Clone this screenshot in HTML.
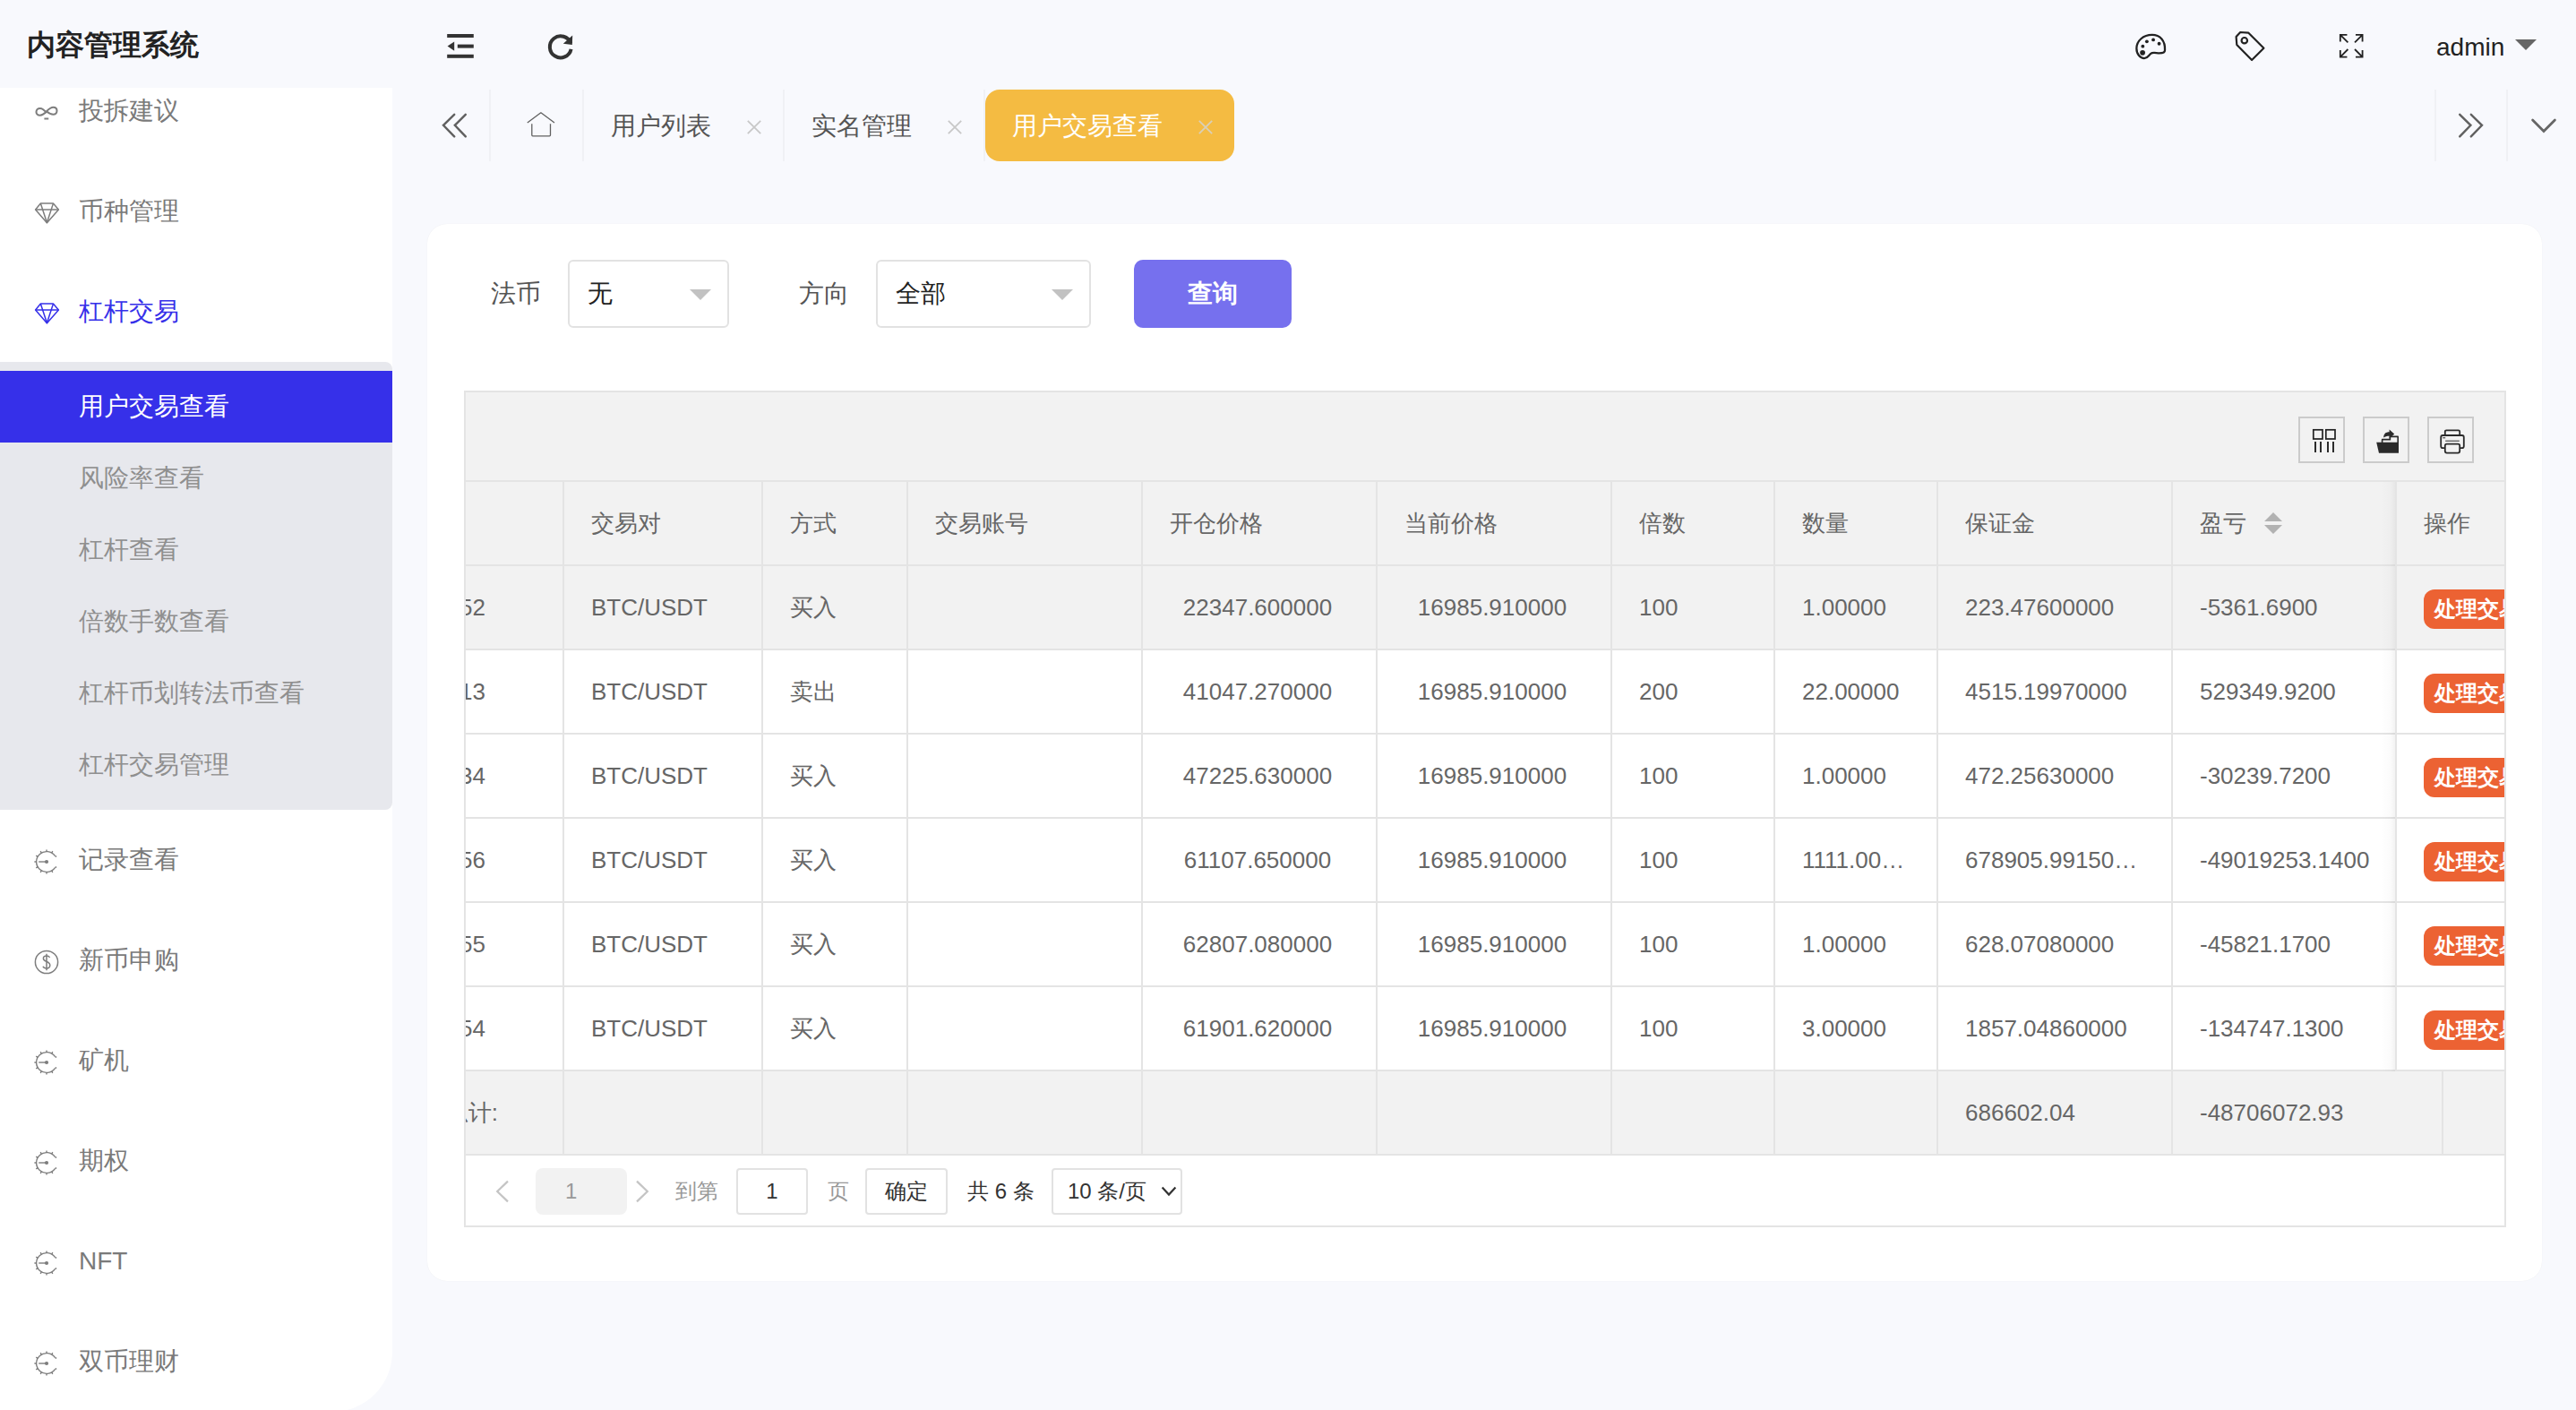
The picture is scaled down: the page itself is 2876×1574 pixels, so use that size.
<!DOCTYPE html>
<html><head><meta charset="utf-8"><style>
html,body{margin:0;padding:0}
@media (min-width:2000px){html{zoom:2}}
body{width:1438px;height:787px;overflow:hidden;position:relative;background:#f8f9fd;font-family:"Liberation Sans",sans-serif;color:#333}
.abs{position:absolute}
svg{position:absolute;overflow:visible}
.logo{left:15px;top:14px;font-size:16px;font-weight:bold;color:#222;line-height:22px}
.side{left:0;top:49px;width:219px;height:739px;background:#fff;border-bottom-right-radius:33.5px;overflow:hidden}
.mi{position:absolute;left:0;width:219px;height:56px;line-height:56px;font-size:14px;color:#7a7a7a}
.mi .t{position:absolute;left:44px;top:0}
.sub{position:absolute;left:0;top:153px;width:219px;height:250px;background:#e7e8ed;border-radius:0 4px 4px 0}
.si{position:absolute;left:0;width:219px;height:40px;line-height:40px;font-size:14px;color:#8f8f8f}
.si .t{position:absolute;left:44px;top:0}
.si.on{background:#3630e9;color:#fff}
.tt{position:absolute;top:50.5px;height:40px;line-height:40px;font-size:14px;color:#555;white-space:nowrap}
.sep{position:absolute;top:50px;width:1px;height:40px;background:#f0f1f5}
.card{left:238.5px;top:125px;width:1180.5px;height:590px;background:#fff;border-radius:11px;box-shadow:0 0 0.5px rgba(0,0,0,0.08)}
.lbl{position:absolute;top:145px;height:38px;line-height:38px;font-size:14px;color:#555}
.sel{position:absolute;top:145px;height:36px;border:1px solid #e2e2e2;border-radius:3px;background:#fff;line-height:36px;font-size:14px;color:#222}
.sel .v{position:absolute;left:10px;top:0}
.sel .tri{position:absolute;top:15.5px;width:0;height:0;border-left:6px solid transparent;border-right:6px solid transparent;border-top:6px solid #c2c2c2}
.btn{position:absolute;left:633px;top:145px;width:88px;height:38px;line-height:38px;background:#7670ee;color:#fff;border-radius:5px;text-align:center;font-size:14px;font-weight:bold}
.tbl{position:absolute;left:259px;top:218px;width:1138px;height:465px;border:1px solid #e4e4e4;background:#fff;overflow:hidden}
.tool{position:absolute;left:0;top:0;width:1138px;height:49px;background:#f2f2f2;border-bottom:1px solid #e4e4e4}
.ib{position:absolute;top:13.5px;width:24px;height:24px;border:1px solid #cbcbcb}
.row{position:absolute;left:0;width:1138px;height:46px;border-bottom:1px solid #e4e4e4}
.c{position:absolute;top:0;height:46px;line-height:46px;font-size:13px;color:#666;white-space:nowrap;overflow:hidden}
.vl{position:absolute;width:1px;background:#e4e4e4}
.n{font-size:13px}
.dbtn{position:absolute;left:1094px;top:13px;width:58px;height:22px;line-height:22px;border-radius:6px;background:#ec6233;color:#fff;font-size:12px;font-weight:bold;padding-left:6px;box-sizing:border-box;white-space:nowrap}
.pg{position:absolute;left:0;top:426px;width:1138px;height:38px;background:#fff}
.pbox{position:absolute;top:7px;height:24px;border:1px solid #e2e2e2;border-radius:2px;line-height:24px;font-size:12px;color:#333;text-align:center}
</style></head><body>
<div class="abs logo">内容管理系统</div>
<svg style="left:249px;top:18px" width="16" height="16" viewBox="0 0 16 16" fill="#333">
<rect x="0.6" y="1" width="14.8" height="2"/><rect x="6.4" y="6.8" width="9" height="2"/><rect x="0.6" y="12.4" width="14.8" height="2"/>
<path d="M0.8 7.8 L4.6 5.2 V10.4 Z"/></svg>
<svg style="left:305px;top:18px" width="16" height="16" viewBox="0 0 16 16" fill="none" stroke="#333" stroke-width="2">
<path d="M13.6 6.2 A6 6 0 1 0 13.8 9.4"/><path d="M14.6 1.8 L14.4 7 L9.4 6.4 Z" fill="#333" stroke="none"/></svg>
<svg style="left:1190.8px;top:15.5px" width="20.4" height="20.4" viewBox="0 0 17 17" fill="none" stroke="#222" stroke-width="0.95">
<path d="M8.6 3.3 C4.6 3.3 1.4 6 1.4 9.6 C1.4 12.4 3.2 14.2 5 14.2 C6.6 14.2 7 12.8 8 12 C9 11.2 10.6 11.8 12 11.8 C14 11.8 14.6 11.4 14.6 10.4 C14.8 6 12.4 3.3 8.6 3.3 Z"/>
<circle cx="4.2" cy="11.6" r="1.2" fill="#222" stroke="none"/><circle cx="4.3" cy="8.6" r="0.8" fill="#222" stroke="none"/><circle cx="6.2" cy="6.4" r="0.8" fill="#222" stroke="none"/><circle cx="9.2" cy="5.6" r="0.8" fill="#222" stroke="none"/><circle cx="11.9" cy="7.4" r="0.8" fill="#222" stroke="none"/>
</svg>
<svg style="left:1246.1px;top:16.6px" width="19.55" height="19.55" viewBox="0 0 17 17" fill="none" stroke="#222" stroke-width="0.95" stroke-linejoin="round">
<path d="M2 3.5 L2.3 7.4 L9.6 14.8 L15.4 9 L8 1.6 L4 1.3 Z"/><circle cx="6" cy="5.3" r="1.4"/></svg>
<svg style="left:1304.4px;top:17.3px" width="16.2" height="16.2" viewBox="0 0 17 17" fill="none" stroke="#222" stroke-width="0.95">
<path d="M2 6 V2 H6 M2 2 L6.5 6.5 M11 2 H15 V6 M15 2 L10.5 6.5 M2 11 V15 H6 M2 15 L6.5 10.5 M15 11 V15 H11 M15 15 L10.5 10.5"/></svg>
<div class="abs" style="left:1360px;top:16px;font-size:14px;line-height:21px;color:#222">admin</div>
<div class="abs" style="left:1404px;top:22px;width:0;height:0;border-left:6px solid transparent;border-right:6px solid transparent;border-top:6px solid #666"></div>
<div class="abs side">
<div class="mi" style="top:-15px"><svg style="left:19.5px;top:25px" width="13" height="10" viewBox="0 0 14 10" fill="none" stroke="#7d7d7d" stroke-width="1.1">
<path d="M7 4 C5.6 2 4.4 1.2 3 1.2 C1.8 1.2 0.8 2.1 0.8 3.4 C0.8 4.6 1.8 5.4 3 5.4 C4.4 5.4 5.6 4.6 7 3 C8.4 1.6 9.6 0.6 11 0.6 C12.3 0.6 13.2 1.5 13.2 2.7 C13.2 4 12.2 4.9 11 4.9 C9.6 4.9 8.4 4.2 7 3"/>
<path d="M5.6 7.4 H8.2"/></svg><span class="t">投拆建议</span></div>
<div class="mi" style="top:41px"><svg style="left:19.5px;top:23px" width="14" height="12" viewBox="0 0 14 12" fill="none" stroke="#7d7d7d" stroke-width="0.75" stroke-linejoin="round">
<path d="M3.2 0.5 H10.2 L13.2 4 L6.7 11.4 L0.3 4 Z"/><path d="M0.4 4 H13.1"/><path d="M3.2 0.6 L6.7 11.3 L10.2 0.6"/>
</svg><span class="t">币种管理</span></div>
<div class="mi" style="top:97px;color:#3630e9"><svg style="left:19.5px;top:23px" width="14" height="12" viewBox="0 0 14 12" fill="none" stroke="#3630e9" stroke-width="0.75" stroke-linejoin="round">
<path d="M3.2 0.5 H10.2 L13.2 4 L6.7 11.4 L0.3 4 Z"/><path d="M0.4 4 H13.1"/><path d="M3.2 0.6 L6.7 11.3 L10.2 0.6"/>
</svg><span class="t">杠杆交易</span></div>
<div class="sub">
<div class="si on" style="top:5px"><span class="t">用户交易查看</span></div>
<div class="si" style="top:45px"><span class="t">风险率查看</span></div>
<div class="si" style="top:85px"><span class="t">杠杆查看</span></div>
<div class="si" style="top:125px"><span class="t">倍数手数查看</span></div>
<div class="si" style="top:165px"><span class="t">杠杆币划转法币查看</span></div>
<div class="si" style="top:205px"><span class="t">杠杆交易管理</span></div>
</div>
<div class="mi" style="top:403px"><svg style="left:19px;top:22px" width="14" height="14" viewBox="0 0 14 14" fill="none" stroke="#7d7d7d" stroke-width="0.7">
<path d="M11.67 3.73 A5.7 5.7 0 1 0 11.67 10.27"/><path d="M11.67 3.73 L12.57 4.23 M11.67 10.27 L12.57 9.77"/>
<path d="M2.6 7 H6.6"/><circle cx="7" cy="7" r="1.05" fill="#7d7d7d" stroke="none"/>
<path d="M9.85 2.06 L10.40 1.11 M7.00 1.30 L7.00 0.20 M4.15 2.06 L3.60 1.11 M2.06 4.15 L1.11 3.60 M1.30 7.00 L0.20 7.00 M2.06 9.85 L1.11 10.40 M4.15 11.94 L3.60 12.89 M7.00 12.70 L7.00 13.80 M9.85 11.94 L10.40 12.89 "/>
</svg><span class="t">记录查看</span></div>
<div class="mi" style="top:459px"><svg style="left:19px;top:22px" width="14" height="14" viewBox="0 0 14 14" fill="none" stroke="#7d7d7d" stroke-width="0.75">
<circle cx="7" cy="7" r="6.3"/><path d="M8.8 4.4 C8.4 3.8 7.8 3.5 7 3.5 C5.9 3.5 5.2 4.1 5.2 5 C5.2 7 8.9 6.3 8.9 8.8 C8.9 9.8 8.1 10.5 7 10.5 C6 10.5 5.3 10.1 5 9.4 M7 2.4 V11.6"/></svg><span class="t">新币申购</span></div>
<div class="mi" style="top:515px"><svg style="left:19px;top:22px" width="14" height="14" viewBox="0 0 14 14" fill="none" stroke="#7d7d7d" stroke-width="0.7">
<path d="M11.67 3.73 A5.7 5.7 0 1 0 11.67 10.27"/><path d="M11.67 3.73 L12.57 4.23 M11.67 10.27 L12.57 9.77"/>
<path d="M2.6 7 H6.6"/><circle cx="7" cy="7" r="1.05" fill="#7d7d7d" stroke="none"/>
<path d="M9.85 2.06 L10.40 1.11 M7.00 1.30 L7.00 0.20 M4.15 2.06 L3.60 1.11 M2.06 4.15 L1.11 3.60 M1.30 7.00 L0.20 7.00 M2.06 9.85 L1.11 10.40 M4.15 11.94 L3.60 12.89 M7.00 12.70 L7.00 13.80 M9.85 11.94 L10.40 12.89 "/>
</svg><span class="t">矿机</span></div>
<div class="mi" style="top:571px"><svg style="left:19px;top:22px" width="14" height="14" viewBox="0 0 14 14" fill="none" stroke="#7d7d7d" stroke-width="0.7">
<path d="M11.67 3.73 A5.7 5.7 0 1 0 11.67 10.27"/><path d="M11.67 3.73 L12.57 4.23 M11.67 10.27 L12.57 9.77"/>
<path d="M2.6 7 H6.6"/><circle cx="7" cy="7" r="1.05" fill="#7d7d7d" stroke="none"/>
<path d="M9.85 2.06 L10.40 1.11 M7.00 1.30 L7.00 0.20 M4.15 2.06 L3.60 1.11 M2.06 4.15 L1.11 3.60 M1.30 7.00 L0.20 7.00 M2.06 9.85 L1.11 10.40 M4.15 11.94 L3.60 12.89 M7.00 12.70 L7.00 13.80 M9.85 11.94 L10.40 12.89 "/>
</svg><span class="t">期权</span></div>
<div class="mi" style="top:627px"><svg style="left:19px;top:22px" width="14" height="14" viewBox="0 0 14 14" fill="none" stroke="#7d7d7d" stroke-width="0.7">
<path d="M11.67 3.73 A5.7 5.7 0 1 0 11.67 10.27"/><path d="M11.67 3.73 L12.57 4.23 M11.67 10.27 L12.57 9.77"/>
<path d="M2.6 7 H6.6"/><circle cx="7" cy="7" r="1.05" fill="#7d7d7d" stroke="none"/>
<path d="M9.85 2.06 L10.40 1.11 M7.00 1.30 L7.00 0.20 M4.15 2.06 L3.60 1.11 M2.06 4.15 L1.11 3.60 M1.30 7.00 L0.20 7.00 M2.06 9.85 L1.11 10.40 M4.15 11.94 L3.60 12.89 M7.00 12.70 L7.00 13.80 M9.85 11.94 L10.40 12.89 "/>
</svg><span class="t">NFT</span></div>
<div class="mi" style="top:683px"><svg style="left:19px;top:22px" width="14" height="14" viewBox="0 0 14 14" fill="none" stroke="#7d7d7d" stroke-width="0.7">
<path d="M11.67 3.73 A5.7 5.7 0 1 0 11.67 10.27"/><path d="M11.67 3.73 L12.57 4.23 M11.67 10.27 L12.57 9.77"/>
<path d="M2.6 7 H6.6"/><circle cx="7" cy="7" r="1.05" fill="#7d7d7d" stroke="none"/>
<path d="M9.85 2.06 L10.40 1.11 M7.00 1.30 L7.00 0.20 M4.15 2.06 L3.60 1.11 M2.06 4.15 L1.11 3.60 M1.30 7.00 L0.20 7.00 M2.06 9.85 L1.11 10.40 M4.15 11.94 L3.60 12.89 M7.00 12.70 L7.00 13.80 M9.85 11.94 L10.40 12.89 "/>
</svg><span class="t">双币理财</span></div>
</div>
<svg style="left:247px;top:63px" width="14" height="14" viewBox="0 0 14 14" fill="none" stroke="#606060" stroke-width="1.2" stroke-linecap="round">
<path d="M6.6 0.9 L0.5 6.9 L6.6 13.2 M12.9 0.9 L6.9 6.9 L12.9 13.2"/></svg>
<div class="sep" style="left:273px"></div>
<svg style="left:294px;top:62px" width="16" height="16" viewBox="0 0 16 16" fill="none" stroke="#606060" stroke-width="0.65" stroke-linejoin="round">
<path d="M0.4 6.5 L7.95 0.9 L15.5 6.5"/><path d="M2.9 7.1 V13.4 Q2.9 13.9 3.4 13.9 H12.75 Q13.25 13.9 13.25 13.4 V7.1"/></svg>
<div class="sep" style="left:325px"></div>
<div class="tt" style="left:341px">用户列表</div>
<svg style="left:417px;top:67px" width="8" height="8" viewBox="0 0 8 8" stroke="#c8c8c8" stroke-width="0.9"><path d="M0.4 0.4 L7.6 7.6 M7.6 0.4 L0.4 7.6"/></svg>
<div class="sep" style="left:437px"></div>
<div class="tt" style="left:453px">实名管理</div>
<svg style="left:529px;top:67px" width="8" height="8" viewBox="0 0 8 8" stroke="#c8c8c8" stroke-width="0.9"><path d="M0.4 0.4 L7.6 7.6 M7.6 0.4 L0.4 7.6"/></svg>
<div class="sep" style="left:549px"></div>
<div class="abs" style="left:550px;top:50px;width:139px;height:40px;background:#f4bb42;border-radius:8px"></div>
<div class="tt" style="left:565px;color:#fff">用户交易查看</div>
<svg style="left:669px;top:67px" width="8" height="8" viewBox="0 0 8 8" stroke="#d9cfb8" stroke-width="0.9"><path d="M0.4 0.4 L7.6 7.6 M7.6 0.4 L0.4 7.6"/></svg>
<div class="sep" style="left:1359px"></div>
<svg style="left:1372px;top:63px" width="14" height="14" viewBox="0 0 14 14" fill="none" stroke="#606060" stroke-width="1.2" stroke-linecap="round">
<path d="M1.1 0.9 L7.2 6.9 L1.1 13.2 M7.4 0.9 L13.5 6.9 L7.4 13.2"/></svg>
<div class="sep" style="left:1399px"></div>
<svg style="left:1413px;top:66px" width="14" height="9" viewBox="0 0 14 9" fill="none" stroke="#666" stroke-width="1.4" stroke-linecap="round">
<path d="M0.8 1 L7 7.2 L13.2 1"/></svg>
<div class="abs card"></div>
<div class="lbl" style="left:274px">法币</div>
<div class="sel" style="left:317px;width:88px"><span class="v">无</span><span class="tri" style="left:67px"></span></div>
<div class="lbl" style="left:446px">方向</div>
<div class="sel" style="left:489px;width:118px"><span class="v">全部</span><span class="tri" style="left:97px"></span></div>
<div class="btn">查询</div>
<div class="tbl">
<div class="tool">
<div class="ib" style="left:1023px"></div>
<div class="ib" style="left:1059px"></div>
<div class="ib" style="left:1095px"></div>
<svg style="left:1023px;top:13.5px" width="26" height="26" viewBox="0 0 26 26" fill="none" stroke="#222" stroke-width="0.85">
<rect x="8.4" y="7.4" width="5.1" height="5.1"/><rect x="15.4" y="7.4" width="5.1" height="5.1"/><path d="M9.5 14 V20 M12.5 14 V20 M16.5 14 V20 M19.5 14 V20" stroke-width="0.95"/></svg>
<svg style="left:1059px;top:13.5px" width="26" height="26" viewBox="0 0 26 26" fill="#2a2a2a">
<path d="M7.6 14.4 H20 V20.4 H9 Z"/><path d="M10.4 14.6 V13 C10.4 12.6 10.6 12.4 11 12.4 H14.8 V11.4 C14.8 11 15 10.8 15.4 10.8 H19.4 C19.8 10.8 20 11 20 11.4 V14.6 H19.2 V11.6 H15.6 V13.2 H11.2 V14.6 Z"/>
<path d="M11.6 11.8 C11.6 9.6 12.8 8.6 14.8 8.6 V7.3 L17.6 9.8 L14.8 12.2 V10.9 C13.4 10.9 12.4 11.2 11.6 11.8 Z"/></svg>
<svg style="left:1095px;top:13.5px" width="26" height="26" viewBox="0 0 26 26" fill="none" stroke="#2a2a2a" stroke-width="0.9">
<path d="M9.9 10.4 V8.4 C9.9 7.9 10.2 7.7 10.7 7.7 H17.3 C17.8 7.7 18.1 7.9 18.1 8.4 V10.4"/>
<path d="M9.6 17.6 H8.6 C7.9 17.6 7.6 17.2 7.6 16.5 V11.6 C7.6 10.9 7.9 10.5 8.6 10.5 H19.4 C20.1 10.5 20.4 10.9 20.4 11.6 V16.5 C20.4 17.2 20.1 17.6 19.4 17.6 H18.4"/>
<rect x="9.9" y="15.3" width="8.2" height="5" rx="1"/><path d="M10.1 13.6 H17.9" stroke-width="0.5"/><path d="M8.6 11.9 H10.1" stroke-width="0.5"/></svg>
</div>
<div class="row" style="top:50px;background:#f2f2f2">
<div class="c" style="left:70px;width:95px">交易对</div>
<div class="c" style="left:181px;width:65px">方式</div>
<div class="c" style="left:262px;width:115px">交易账号</div>
<div class="c" style="left:393px;width:115px">开仓价格</div>
<div class="c" style="left:524px;width:115px">当前价格</div>
<div class="c" style="left:655px;width:75px">倍数</div>
<div class="c" style="left:746px;width:75px">数量</div>
<div class="c" style="left:837px;width:115px">保证金</div>
<div class="c" style="left:968px;width:135px">盈亏</div>
</div>
<svg style="left:1004px;top:67px" width="10" height="12" viewBox="0 0 10 12" fill="#b2b2b2"><path d="M0 5 L5 0 L10 5 Z M0 7 H10 L5 12 Z"/></svg>
<div class="row" style="top:97px;background:#f2f2f2">
<div class="c n" style="left:0;width:54px"><span style="position:absolute;right:43px">152</span></div>
<div class="c n" style="left:70px;width:95px">BTC/USDT</div>
<div class="c" style="left:181px;width:65px">买入</div>
<div class="c n" style="left:378px;width:128px;text-align:center">22347.600000</div>
<div class="c n" style="left:509px;width:128px;text-align:center">16985.910000</div>
<div class="c n" style="left:655px;width:75px">100</div>
<div class="c n" style="left:746px;width:75px">1.00000</div>
<div class="c n" style="left:837px;width:115px">223.47600000</div>
<div class="c n" style="left:968px;width:135px">-5361.6900</div>
</div>
<div class="row" style="top:144px;background:#fff">
<div class="c n" style="left:0;width:54px"><span style="position:absolute;right:43px">113</span></div>
<div class="c n" style="left:70px;width:95px">BTC/USDT</div>
<div class="c" style="left:181px;width:65px">卖出</div>
<div class="c n" style="left:378px;width:128px;text-align:center">41047.270000</div>
<div class="c n" style="left:509px;width:128px;text-align:center">16985.910000</div>
<div class="c n" style="left:655px;width:75px">200</div>
<div class="c n" style="left:746px;width:75px">22.00000</div>
<div class="c n" style="left:837px;width:115px">4515.19970000</div>
<div class="c n" style="left:968px;width:135px">529349.9200</div>
</div>
<div class="row" style="top:191px;background:#fff">
<div class="c n" style="left:0;width:54px"><span style="position:absolute;right:43px">134</span></div>
<div class="c n" style="left:70px;width:95px">BTC/USDT</div>
<div class="c" style="left:181px;width:65px">买入</div>
<div class="c n" style="left:378px;width:128px;text-align:center">47225.630000</div>
<div class="c n" style="left:509px;width:128px;text-align:center">16985.910000</div>
<div class="c n" style="left:655px;width:75px">100</div>
<div class="c n" style="left:746px;width:75px">1.00000</div>
<div class="c n" style="left:837px;width:115px">472.25630000</div>
<div class="c n" style="left:968px;width:135px">-30239.7200</div>
</div>
<div class="row" style="top:238px;background:#fff">
<div class="c n" style="left:0;width:54px"><span style="position:absolute;right:43px">156</span></div>
<div class="c n" style="left:70px;width:95px">BTC/USDT</div>
<div class="c" style="left:181px;width:65px">买入</div>
<div class="c n" style="left:378px;width:128px;text-align:center">61107.650000</div>
<div class="c n" style="left:509px;width:128px;text-align:center">16985.910000</div>
<div class="c n" style="left:655px;width:75px">100</div>
<div class="c n" style="left:746px;width:75px">1111.00…</div>
<div class="c n" style="left:837px;width:115px">678905.99150…</div>
<div class="c n" style="left:968px;width:135px">-49019253.1400</div>
</div>
<div class="row" style="top:285px;background:#fff">
<div class="c n" style="left:0;width:54px"><span style="position:absolute;right:43px">155</span></div>
<div class="c n" style="left:70px;width:95px">BTC/USDT</div>
<div class="c" style="left:181px;width:65px">买入</div>
<div class="c n" style="left:378px;width:128px;text-align:center">62807.080000</div>
<div class="c n" style="left:509px;width:128px;text-align:center">16985.910000</div>
<div class="c n" style="left:655px;width:75px">100</div>
<div class="c n" style="left:746px;width:75px">1.00000</div>
<div class="c n" style="left:837px;width:115px">628.07080000</div>
<div class="c n" style="left:968px;width:135px">-45821.1700</div>
</div>
<div class="row" style="top:332px;background:#fff">
<div class="c n" style="left:0;width:54px"><span style="position:absolute;right:43px">154</span></div>
<div class="c n" style="left:70px;width:95px">BTC/USDT</div>
<div class="c" style="left:181px;width:65px">买入</div>
<div class="c n" style="left:378px;width:128px;text-align:center">61901.620000</div>
<div class="c n" style="left:509px;width:128px;text-align:center">16985.910000</div>
<div class="c n" style="left:655px;width:75px">100</div>
<div class="c n" style="left:746px;width:75px">3.00000</div>
<div class="c n" style="left:837px;width:115px">1857.04860000</div>
<div class="c n" style="left:968px;width:135px">-134747.1300</div>
</div>
<div class="row" style="top:379px;background:#f2f2f2">
<div class="c" style="left:0;width:54px"><span style="position:absolute;right:36px">总计:</span></div>
<div class="c n" style="left:837px">686602.04</div>
<div class="c n" style="left:968px">-48706072.93</div>
</div>
<div class="vl" style="left:54px;top:50px;height:376px"></div>
<div class="vl" style="left:165px;top:50px;height:376px"></div>
<div class="vl" style="left:246px;top:50px;height:376px"></div>
<div class="vl" style="left:377px;top:50px;height:376px"></div>
<div class="vl" style="left:508px;top:50px;height:376px"></div>
<div class="vl" style="left:639px;top:50px;height:376px"></div>
<div class="vl" style="left:730px;top:50px;height:376px"></div>
<div class="vl" style="left:821px;top:50px;height:376px"></div>
<div class="vl" style="left:952px;top:50px;height:376px"></div>
<div class="vl" style="left:1103px;top:50px;height:376px"></div>
<div class="abs" style="left:1069px;top:50px;width:9px;height:329px;background:linear-gradient(to right,rgba(0,0,0,0),rgba(0,0,0,0.015) 60%,rgba(0,0,0,0.06))"></div>
<div class="abs" style="left:1077px;top:50px;width:70px;height:329px;background:#fff;border-left:1px solid #e4e4e4">
<div class="abs" style="left:0;top:0;width:70px;height:46px;background:#f2f2f2;border-bottom:1px solid #e4e4e4"><div class="c" style="left:15px">操作</div></div>
<div class="abs" style="left:0;top:47px;width:70px;height:46px;background:#f2f2f2;border-bottom:1px solid #e4e4e4"><div class="dbtn" style="left:15px">处理交易</div></div>
<div class="abs" style="left:0;top:94px;width:70px;height:46px;background:#fff;border-bottom:1px solid #e4e4e4"><div class="dbtn" style="left:15px">处理交易</div></div>
<div class="abs" style="left:0;top:141px;width:70px;height:46px;background:#fff;border-bottom:1px solid #e4e4e4"><div class="dbtn" style="left:15px">处理交易</div></div>
<div class="abs" style="left:0;top:188px;width:70px;height:46px;background:#fff;border-bottom:1px solid #e4e4e4"><div class="dbtn" style="left:15px">处理交易</div></div>
<div class="abs" style="left:0;top:235px;width:70px;height:46px;background:#fff;border-bottom:1px solid #e4e4e4"><div class="dbtn" style="left:15px">处理交易</div></div>
<div class="abs" style="left:0;top:282px;width:70px;height:46px;background:#fff;border-bottom:1px solid #e4e4e4"><div class="dbtn" style="left:15px">处理交易</div></div>
</div>
<div class="pg">
<svg style="left:16px;top:13.5px" width="9" height="13" viewBox="0 0 9 13" fill="none" stroke="#c4c4c4" stroke-width="1.1"><path d="M7.5 0.8 L1.6 6.5 L7.5 12.2"/></svg>
<div class="abs" style="left:39px;top:7px;width:51px;height:26px;background:#f2f2f2;border-radius:4px;line-height:26px;font-size:12px;color:#999;box-sizing:border-box;padding-left:16.5px">1</div>
<svg style="left:94px;top:13.5px" width="9" height="13" viewBox="0 0 9 13" fill="none" stroke="#c4c4c4" stroke-width="1.1"><path d="M1.5 0.8 L7.4 6.5 L1.5 12.2"/></svg>
<div class="abs" style="left:117px;top:7px;line-height:26px;font-size:12px;color:#999">到第</div>
<div class="pbox" style="left:151px;width:38px">1</div>
<div class="abs" style="left:202px;top:7px;line-height:26px;font-size:12px;color:#999">页</div>
<div class="pbox" style="left:223px;width:44px">确定</div>
<div class="abs" style="left:280px;top:7px;line-height:26px;font-size:12px;color:#333">共 6 条</div>
<div class="pbox" style="left:327px;width:71px;text-align:left"><span style="position:absolute;left:8px">10 条/页</span></div>
<svg style="left:388px;top:17px" width="9" height="6" viewBox="0 0 9 6" fill="none" stroke="#333" stroke-width="1.1"><path d="M0.8 0.8 L4.5 4.8 L8.2 0.8"/></svg>
</div>
</div>
</body></html>
